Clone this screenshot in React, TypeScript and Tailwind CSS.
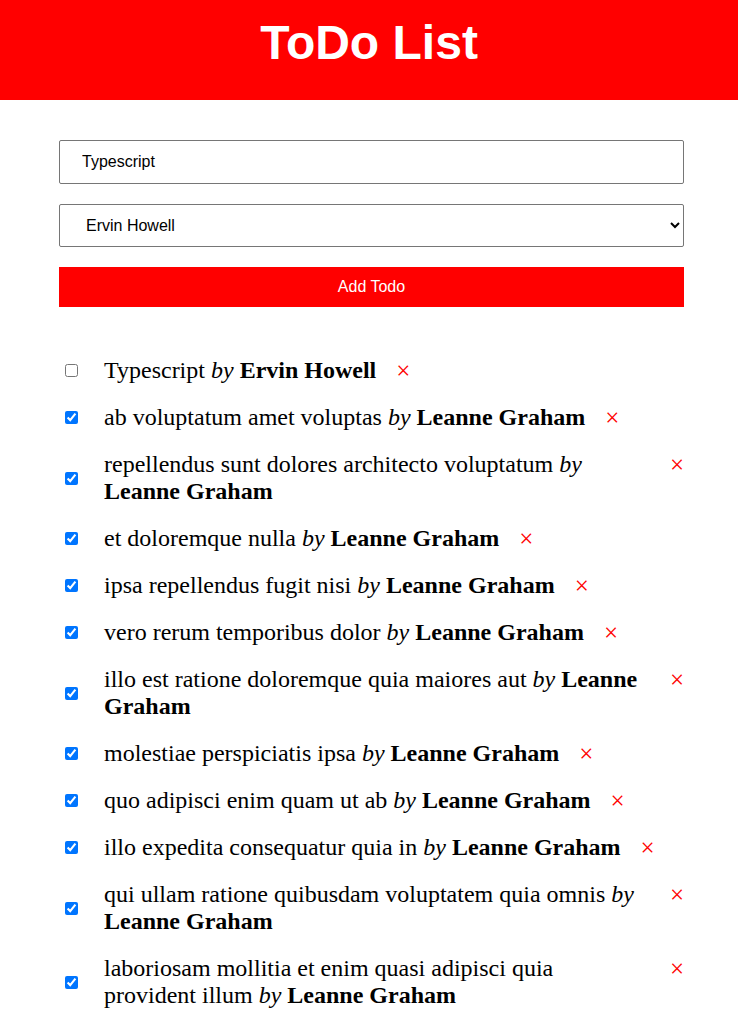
import { useState } from "react";

type Todo = { id: number; title: string; user: string; done: boolean };

const users = ["Leanne Graham", "Ervin Howell", "Clementine Bauch", "Patricia Lebsack"];

const initialTodos: Todo[] = [
  { id: 201, title: "Typescript", user: "Ervin Howell", done: false },
  { id: 1, title: "ab voluptatum amet voluptas", user: "Leanne Graham", done: true },
  { id: 2, title: "repellendus sunt dolores architecto voluptatum", user: "Leanne Graham", done: true },
  { id: 3, title: "et doloremque nulla", user: "Leanne Graham", done: true },
  { id: 4, title: "ipsa repellendus fugit nisi", user: "Leanne Graham", done: true },
  { id: 5, title: "vero rerum temporibus dolor", user: "Leanne Graham", done: true },
  { id: 6, title: "illo est ratione doloremque quia maiores aut", user: "Leanne Graham", done: true },
  { id: 7, title: "molestiae perspiciatis ipsa", user: "Leanne Graham", done: true },
  { id: 8, title: "quo adipisci enim quam ut ab", user: "Leanne Graham", done: true },
  { id: 9, title: "illo expedita consequatur quia in", user: "Leanne Graham", done: true },
  { id: 10, title: "qui ullam ratione quibusdam voluptatem quia omnis", user: "Leanne Graham", done: true },
  { id: 11, title: "laboriosam mollitia et enim quasi adipisci quia provident illum", user: "Leanne Graham", done: true },
];

function TodoItem({ todo, onToggle, onRemove }: { todo: Todo; onToggle: () => void; onRemove: () => void }) {
  return (
    <li className="flex items-center py-[10px] font-['Liberation_Serif',serif] text-[24px] leading-[normal] text-black">
      <input
        type="checkbox"
        checked={todo.done}
        onChange={onToggle}
        className="ml-[6px] w-[13px] h-[13px] shrink-0"
      />
      <span className="ml-[26px]">
        {todo.title} <i>by</i> <b>{todo.user}</b>
      </span>
      <button
        onClick={onRemove}
        className="self-start ml-[20px] shrink-0 text-[#ff0000] text-[25px] leading-[27px] cursor-pointer"
      >
        ×
      </button>
    </li>
  );
}

export default function App() {
  const [todos, setTodos] = useState<Todo[]>(initialTodos);
  const [title, setTitle] = useState("Typescript");
  const [user, setUser] = useState("Ervin Howell");

  const addTodo = () => {
    if (!title.trim()) return;
    setTodos([{ id: Date.now(), title, user, done: false }, ...todos]);
  };

  return (
    <div className="min-h-screen bg-white font-['Liberation_Sans',Arial,sans-serif]">
      {/* header */}
      <div className="h-[100px] bg-[#ff0000] pt-[15px]">
        <h1 className="text-center text-white text-[48px] font-bold leading-[normal]">ToDo List</h1>
      </div>

      <div className="ml-[59px] w-[625px] pt-[40px]">
        <input
          value={title}
          onChange={(e) => setTitle(e.target.value)}
          className="block w-full h-[44px] border border-[#767676] rounded-[2px] pl-[22px] text-[16px] text-black outline-none"
        />
        <select
          value={user}
          onChange={(e) => setUser(e.target.value)}
          className="block w-full h-[43px] mt-[20px] border border-[#767676] rounded-[2px] pl-[22px] pr-[6px] text-[16px] text-black bg-white"
        >
          {users.map((u) => (
            <option key={u} value={u}>
              {u}
            </option>
          ))}
        </select>
        <button
          onClick={addTodo}
          className="block w-full h-[40px] mt-[20px] bg-[#ff0000] text-white text-[16px] cursor-pointer"
        >
          Add Todo
        </button>

        <ul className="mt-[40px]">
          {todos.map((t) => (
            <TodoItem
              key={t.id}
              todo={t}
              onToggle={() => setTodos(todos.map((x) => (x.id === t.id ? { ...x, done: !x.done } : x)))}
              onRemove={() => setTodos(todos.filter((x) => x.id !== t.id))}
            />
          ))}
        </ul>
      </div>
    </div>
  );
}
